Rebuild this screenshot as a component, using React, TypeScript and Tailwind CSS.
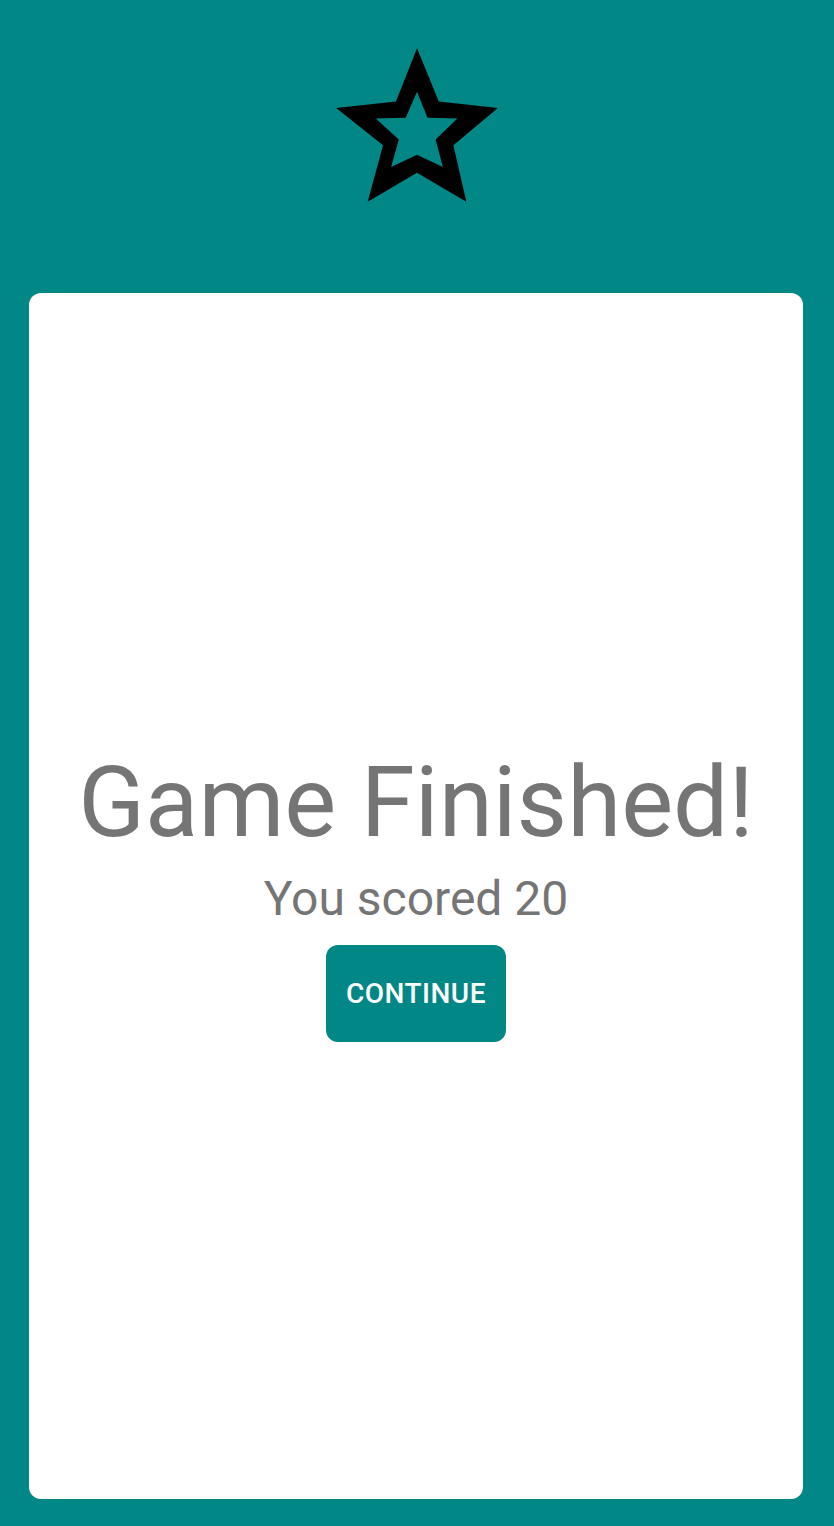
export default function App() {
  return (
    <div className="min-h-screen h-[1526px] bg-[#018786] flex flex-col font-['Roboto',sans-serif]">
      <div className="h-[293px] flex justify-center pt-[32px]">
        <svg width="194" height="194" viewBox="0 0 24 24" fill="#000">
          <path
            fillRule="evenodd"
            d="M12 2L14.7 8.6L22 9.4L16.5 14L18.1 21L12 17.4L5.9 21L7.8 14L2 9.4L9.4 8.6Z M12 7.4L13.3 10.6L17 10.7L14.3 13.3L15.2 16.7L12 15.2L8.8 16.7L9.75 13.3L6.9 10.7L10.6 10.6Z"
          />
        </svg>
      </div>

      <div className="flex-1 ml-[29px] mr-[31px] mb-[27px] bg-white rounded-[12px] flex flex-col items-center justify-center pb-[4px]">
        <h1 className="text-[98px] leading-[114px] text-[#757575] font-normal">Game Finished!</h1>
        <p className="mt-[11px] text-[48px] leading-[56px] text-[#757575]">You scored 20</p>
        <button className="mt-[18px] w-[180px] h-[97px] rounded-[12px] bg-[#018786] text-white text-[28px] font-medium tracking-[0.5px]">
          CONTINUE
        </button>
      </div>
    </div>
  );
}
